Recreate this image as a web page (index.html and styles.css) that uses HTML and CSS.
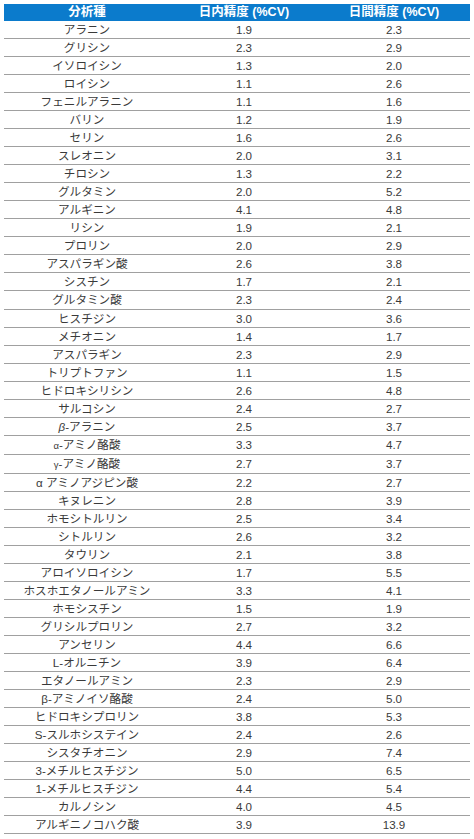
FILE: index.html
```html
<!DOCTYPE html>
<html lang="ja">
<head>
<meta charset="utf-8">
<link rel="stylesheet" href="styles.css">
</head>
<body>
<table class="prec">
<colgroup><col class="c1"><col class="c2"><col class="c3"></colgroup>
<thead>
<tr><th>分析種</th><th>日内精度 (%CV)</th><th>日間精度 (%CV)</th></tr>
</thead>
<tbody>
<tr><td>アラニン</td><td>1.9</td><td>2.3</td></tr>
<tr><td>グリシン</td><td>2.3</td><td>2.9</td></tr>
<tr><td>イソロイシン</td><td>1.3</td><td>2.0</td></tr>
<tr><td>ロイシン</td><td>1.1</td><td>2.6</td></tr>
<tr><td>フェニルアラニン</td><td>1.1</td><td>1.6</td></tr>
<tr><td>バリン</td><td>1.2</td><td>1.9</td></tr>
<tr><td>セリン</td><td>1.6</td><td>2.6</td></tr>
<tr><td>スレオニン</td><td>2.0</td><td>3.1</td></tr>
<tr><td>チロシン</td><td>1.3</td><td>2.2</td></tr>
<tr><td>グルタミン</td><td>2.0</td><td>5.2</td></tr>
<tr><td>アルギニン</td><td>4.1</td><td>4.8</td></tr>
<tr><td>リシン</td><td>1.9</td><td>2.1</td></tr>
<tr><td>プロリン</td><td>2.0</td><td>2.9</td></tr>
<tr><td>アスパラギン酸</td><td>2.6</td><td>3.8</td></tr>
<tr><td>シスチン</td><td>1.7</td><td>2.1</td></tr>
<tr><td>グルタミン酸</td><td>2.3</td><td>2.4</td></tr>
<tr><td>ヒスチジン</td><td>3.0</td><td>3.6</td></tr>
<tr><td>メチオニン</td><td>1.4</td><td>1.7</td></tr>
<tr><td>アスパラギン</td><td>2.3</td><td>2.9</td></tr>
<tr><td>トリプトファン</td><td>1.1</td><td>1.5</td></tr>
<tr><td>ヒドロキシリシン</td><td>2.6</td><td>4.8</td></tr>
<tr><td>サルコシン</td><td>2.4</td><td>2.7</td></tr>
<tr><td><i class="gk">β</i>-アラニン</td><td>2.5</td><td>3.7</td></tr>
<tr><td><span class="sm">α</span>-アミノ酪酸</td><td>3.3</td><td>4.7</td></tr>
<tr><td><span class="sm">γ</span>-アミノ酪酸</td><td>2.7</td><td>3.7</td></tr>
<tr><td>α アミノアジピン酸</td><td>2.2</td><td>2.7</td></tr>
<tr><td>キヌレニン</td><td>2.8</td><td>3.9</td></tr>
<tr><td>ホモシトルリン</td><td>2.5</td><td>3.4</td></tr>
<tr><td>シトルリン</td><td>2.6</td><td>3.2</td></tr>
<tr><td>タウリン</td><td>2.1</td><td>3.8</td></tr>
<tr><td>アロイソロイシン</td><td>1.7</td><td>5.5</td></tr>
<tr><td>ホスホエタノールアミン</td><td>3.3</td><td>4.1</td></tr>
<tr><td>ホモシスチン</td><td>1.5</td><td>1.9</td></tr>
<tr><td>グリシルプロリン</td><td>2.7</td><td>3.2</td></tr>
<tr><td>アンセリン</td><td>4.4</td><td>6.6</td></tr>
<tr><td>L-オルニチン</td><td>3.9</td><td>6.4</td></tr>
<tr><td>エタノールアミン</td><td>2.3</td><td>2.9</td></tr>
<tr><td>β-アミノイソ酪酸</td><td>2.4</td><td>5.0</td></tr>
<tr><td>ヒドロキシプロリン</td><td>3.8</td><td>5.3</td></tr>
<tr><td>S-スルホシステイン</td><td>2.4</td><td>2.6</td></tr>
<tr><td>シスタチオニン</td><td>2.9</td><td>7.4</td></tr>
<tr><td>3-メチルヒスチジン</td><td>5.0</td><td>6.5</td></tr>
<tr><td>1-メチルヒスチジン</td><td>4.4</td><td>5.4</td></tr>
<tr><td>カルノシン</td><td>4.0</td><td>4.5</td></tr>
<tr><td>アルギニノコハク酸</td><td>3.9</td><td>13.9</td></tr>
</tbody>
</table>
</body>
</html>
```

FILE: styles.css
```css
html, body {
  margin: 0;
  padding: 0;
  background: #ffffff;
}
body {
  padding: 4px 4px 0 4px;
  font-family: "Liberation Sans", "Noto Sans CJK JP", sans-serif;
  color: #3a3a3a;
}
.prec {
  width: 466px;
  border-collapse: collapse;
  table-layout: fixed;
}
.c1 { width: 166px; }
.c2 { width: 148px; }
.c3 { width: 152px; }
.prec th {
  background: #0b7bcc;
  color: #ffffff;
  font-weight: bold;
  font-size: 12.5px;
  height: 17px;
  padding: 0;
  line-height: 17px;
  text-align: center;
}
.prec td {
  height: 17.04px;
  padding: 0;
  line-height: 17px;
  font-size: 11.6px;
  text-align: center;
  border-bottom: 1px solid #a0a0a0;
}
.gk { font-style: italic; }
.sm { font-size: 9.5px; }
```
